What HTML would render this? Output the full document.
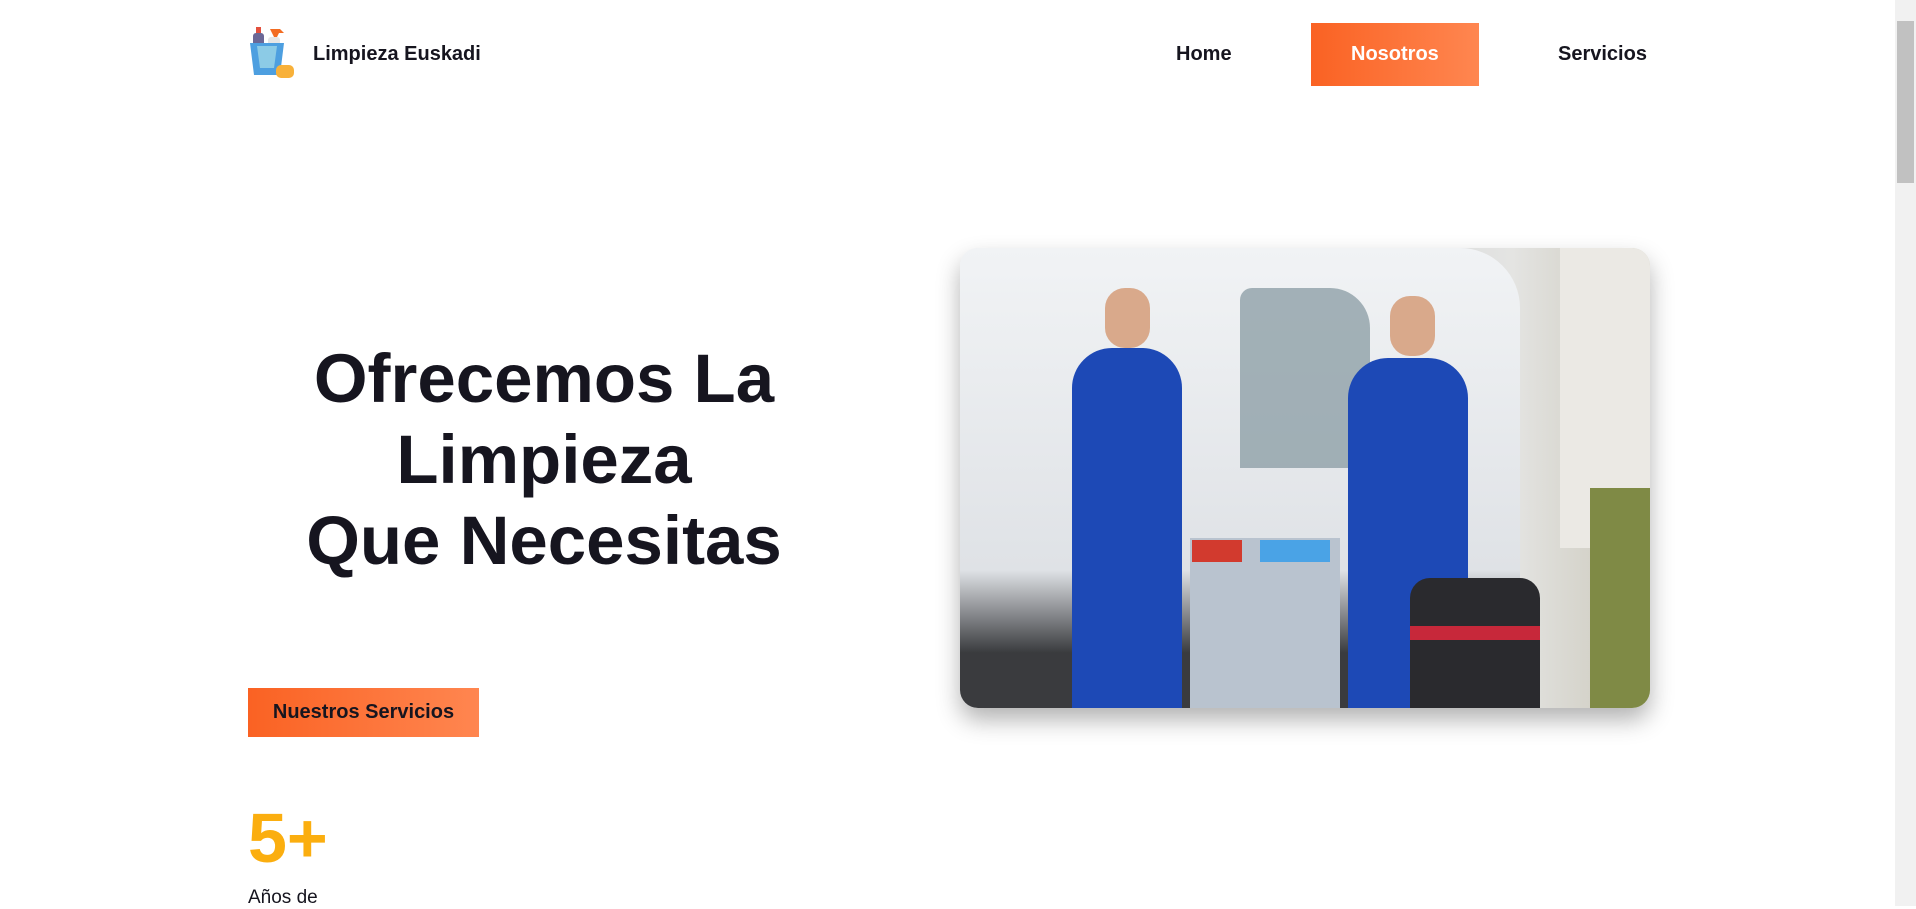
<!DOCTYPE html>
<html><head><meta charset="utf-8"><style>
*{margin:0;padding:0;box-sizing:border-box}
html,body{width:1916px;height:906px;overflow:hidden;background:#fff;font-family:"Liberation Sans",Arial,sans-serif;color:#16151f}
.abs{position:absolute}
.nav{font-weight:bold;font-size:20px}
.sb{position:absolute;right:0;top:0;width:21px;height:906px;background:#f1f1f1}
.sb .th{position:absolute;left:2px;right:2px;top:21px;height:162px;background:#c1c1c1}
</style></head><body>
<svg class="abs" style="left:248px;top:27px" width="50" height="52" viewBox="0 0 50 52">
<rect x="8" y="0" width="5" height="6" fill="#e3503d"/>
<rect x="5" y="6" width="11" height="18" rx="3" fill="#6b6796"/>
<path d="M22 2h10l4 4h-5l-2 4h-3z" fill="#f36c22"/>
<rect x="20" y="10" width="12" height="16" rx="3" fill="#e6e6e6"/>
<path d="M2 16h34l-4 32H6z" fill="#4d9fe0"/>
<path d="M9 19h20l-3 22H12z" fill="#8ccbe6"/>
<rect x="28" y="38" width="18" height="13" rx="5" fill="#f8b13a"/>
</svg>
<div class="abs nav" style="left:313px;top:43px">Limpieza Euskadi</div>
<div class="abs nav" style="left:1176px;top:43px">Home</div>
<div class="abs" style="left:1311px;top:23px;width:168px;height:63px;background:linear-gradient(90deg,#fa6223,#ff8650)"></div>
<div class="abs nav" style="left:1351px;top:43px;color:#fff">Nosotros</div>
<div class="abs nav" style="left:1558px;top:43px">Servicios</div>
<div class="abs" style="left:244px;top:338px;width:600px;text-align:center;font-weight:bold;font-size:69px;line-height:81px">Ofrecemos La<br>Limpieza<br>Que Necesitas</div>
<div class="abs" style="left:248px;top:688px;width:231px;height:49px;background:linear-gradient(90deg,#fa6223,#ff8650);font-weight:bold;font-size:20px;text-align:center;line-height:49px">Nuestros Servicios</div>
<div class="abs" style="left:960px;top:248px;width:690px;height:460px;border-radius:18px;overflow:hidden;box-shadow:0 12px 24px rgba(0,0,0,.3);background:linear-gradient(90deg,#e9ecef 0,#dfe3e7 40%,#d6d9dc 60%,#e4e4e2 80%,#c9c6b8 100%)">
<div class="abs" style="left:0;top:0;width:560px;height:460px;background:linear-gradient(180deg,#f1f3f5,#dfe2e6 70%,#3a3b3e 88%);border-radius:0 60px 0 0"></div>
<div class="abs" style="left:280px;top:40px;width:130px;height:180px;background:#8fa0a8;border-radius:12px 40px 0 0;opacity:.8"></div>
<div class="abs" style="left:600px;top:0;width:90px;height:300px;background:#ebe9e4"></div>
<div class="abs" style="left:630px;top:240px;width:60px;height:220px;background:#7f8a45"></div>
<div class="abs" style="left:112px;top:100px;width:110px;height:360px;background:#1d49b6;border-radius:40px 40px 0 0"></div>
<div class="abs" style="left:145px;top:40px;width:45px;height:60px;background:#d9a98b;border-radius:20px"></div>
<div class="abs" style="left:388px;top:110px;width:120px;height:350px;background:#1d49b6;border-radius:40px 40px 0 0"></div>
<div class="abs" style="left:430px;top:48px;width:45px;height:60px;background:#d9a98b;border-radius:20px"></div>
<div class="abs" style="left:230px;top:290px;width:150px;height:170px;background:#b9c3cf"></div>
<div class="abs" style="left:232px;top:292px;width:50px;height:22px;background:#d23a2e"></div>
<div class="abs" style="left:300px;top:292px;width:70px;height:22px;background:#4aa3e6"></div>
<div class="abs" style="left:450px;top:330px;width:130px;height:130px;background:#2a2a2e;border-radius:20px 20px 0 0"></div>
<div class="abs" style="left:450px;top:378px;width:130px;height:14px;background:#c7283a"></div>
</div>
<div class="abs" style="left:248px;top:798px;font-weight:bold;font-size:70px;color:#fbae0f">5+</div>
<div class="abs" style="left:248px;top:887px;font-size:19px">Años de</div>
<div class="sb"><div class="th"></div></div>
</body></html>
